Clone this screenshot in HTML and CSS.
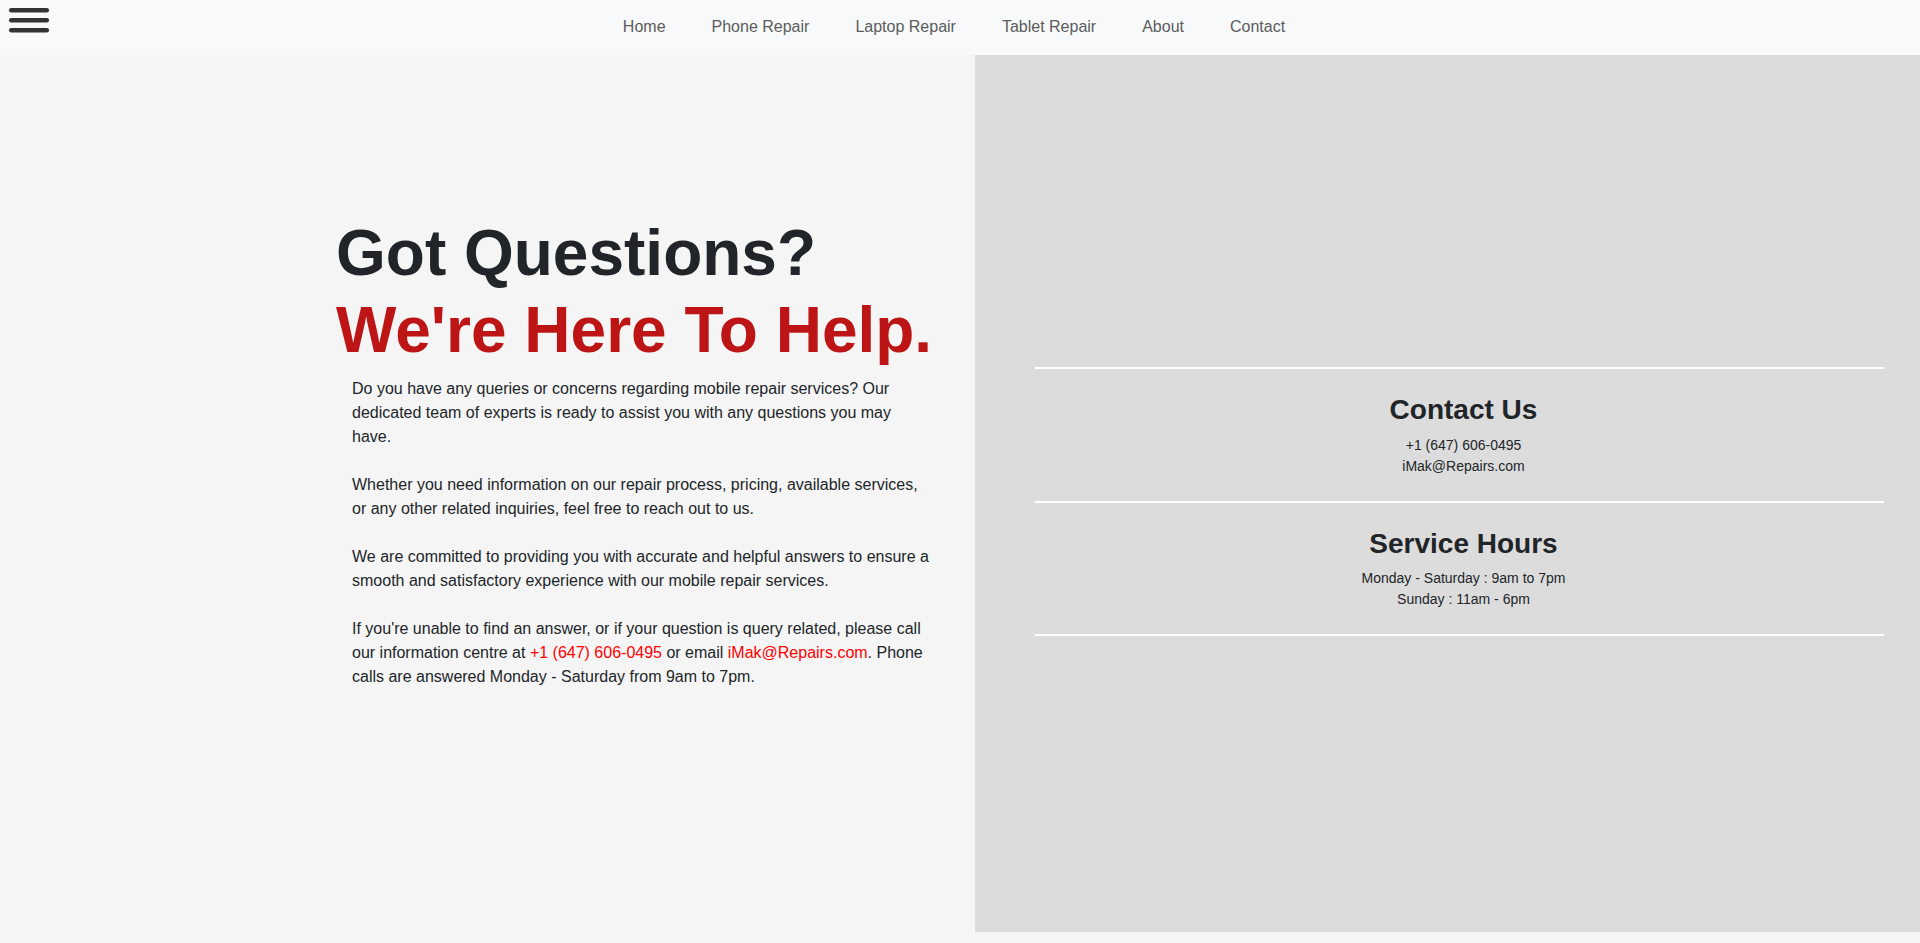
FILE: index.html
```html
<!DOCTYPE html>
<html lang="en">
<head>
<meta charset="utf-8">
<title>Contact - iMak Repairs</title>
<link rel="stylesheet" href="styles.css">
</head>
<body>
<header class="navbar">
  <button class="menu-btn" aria-label="Menu">
    <svg class="menu-icon" width="56" height="40" viewBox="0 0 56 40">
      <line x1="11.2" y1="10.2" x2="46.8" y2="10.2"/>
      <line x1="11.2" y1="20.2" x2="46.8" y2="20.2"/>
      <line x1="11.2" y1="30.2" x2="46.8" y2="30.2"/>
    </svg>
  </button>
  <nav class="nav">
    <a class="nav-link" href="#">Home</a>
    <a class="nav-link" href="#">Phone Repair</a>
    <a class="nav-link" href="#">Laptop Repair</a>
    <a class="nav-link" href="#">Tablet Repair</a>
    <a class="nav-link" href="#">About</a>
    <a class="nav-link" href="#">Contact</a>
  </nav>
  <div class="nav-spacer"></div>
</header>

<main class="main">
  <section class="intro">
    <h1 class="headline"><span class="headline-line">Got Questions?</span><span class="headline-line headline-red">We're Here To Help.</span></h1>
    <div class="intro-text">
      <p>Do you have any queries or concerns regarding mobile repair services? Our dedicated team of experts is ready to assist you with any questions you may have.</p>
      <p>Whether you need information on our repair process, pricing, available services, or any other related inquiries, feel free to reach out to us.</p>
      <p>We are committed to providing you with accurate and helpful answers to ensure a smooth and satisfactory experience with our mobile repair services.</p>
      <p>If you're unable to find an answer, or if your question is query related, please call our information centre at <a class="red-link" href="#">+1 (647) 606-0495</a> or email <a class="red-link" href="#">iMak@Repairs.com</a>. Phone calls are answered Monday - Saturday from 9am to 7pm.</p>
    </div>
  </section>

  <aside class="info">
    <hr class="divider">
    <div class="info-block">
      <h3 class="info-title">Contact Us</h3>
      <p class="info-line">+1 (647) 606-0495</p>
      <p class="info-line">iMak@Repairs.com</p>
    </div>
    <hr class="divider">
    <div class="info-block">
      <h3 class="info-title">Service Hours</h3>
      <p class="info-line">Monday - Saturday : 9am to 7pm</p>
      <p class="info-line">Sunday : 11am - 6pm</p>
    </div>
    <hr class="divider">
  </aside>
</main>
</body>
</html>
```

FILE: styles.css
```css
* { box-sizing: border-box; }

html, body {
  margin: 0;
  padding: 0;
}

body {
  font-family: "Liberation Sans", Arial, Helvetica, sans-serif;
  font-size: 16px;
  line-height: 1.5;
  color: #212529;
  background: #f5f5f5;
  height: 943px;
  overflow: hidden;
}

/* ---------- navbar ---------- */
.navbar {
  height: 55px;
  background: #f8f9fa;
  display: grid;
  grid-template-columns: 1fr auto 1fr;
  align-items: center;
}

.menu-btn {
  justify-self: start;
  align-self: start;
  padding: 0;
  margin: 0;
  border: 0;
  background: none;
  width: 56px;
  height: 40px;
  display: block;
}

.menu-icon {
  display: block;
}

.menu-icon line {
  stroke: #333333;
  stroke-width: 4.4;
  stroke-linecap: round;
}

.nav {
  display: flex;
  margin-right: 12px;
  margin-bottom: 2px;
}

.nav-link {
  display: block;
  padding: 0 23px;
  line-height: 24px;
  color: #5c5c5c;
  text-decoration: none;
  white-space: nowrap;
}

/* ---------- main ---------- */
.main {
  display: grid;
  grid-template-columns: 975px 945px;
  height: 877px;
}

.intro {
  padding: 160px 27px 0 336px;
}

.headline {
  margin: 0 0 8px 0;
  font-size: 64px;
  line-height: 1.2;
  font-weight: 700;
  color: #212529;
  white-space: nowrap;
}

.headline-line {
  display: block;
}

.headline-red {
  color: #bd1515;
}

.intro-text {
  padding: 0 16px;
}

.intro-text p {
  margin: 0 0 24px 0;
}

.red-link {
  color: #ff0000;
  text-decoration: none;
}

/* ---------- info panel ---------- */
.info {
  background: #dcdcdc;
  padding: 312px 36px 0 60px;
}

.divider {
  margin: 0;
  border: 0;
  height: 2px;
  background: #ffffff;
}

.info-block {
  text-align: center;
  padding: 24px 0 24px 8px;
}

.info-title {
  margin: 0 0 8px 0;
  font-size: 28px;
  line-height: 1.2;
  font-weight: 700;
  color: #212529;
}

.info-line {
  margin: 0;
  font-size: 14px;
  line-height: 21px;
  color: #212529;
}
```
